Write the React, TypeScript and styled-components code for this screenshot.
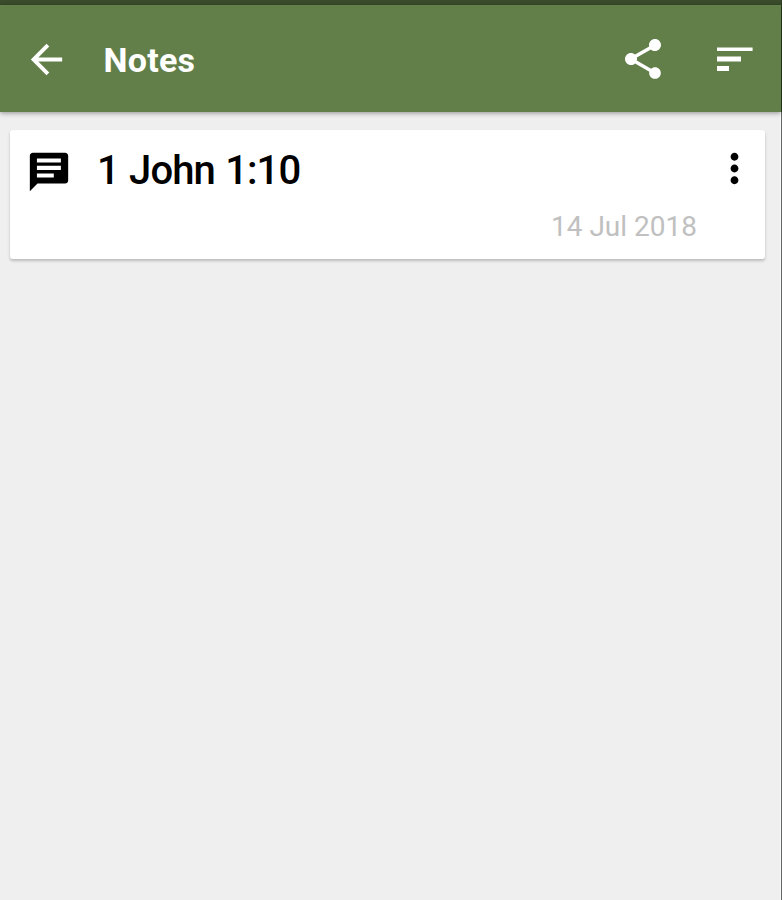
import React from "react";
import styled, { createGlobalStyle } from "styled-components";

const GlobalStyle = createGlobalStyle`
  *, *::before, *::after { box-sizing: border-box; }
  body { margin: 0; background: #efefef; }
`;

const Screen = styled.div`
  width: 782px;
  height: 900px;
  display: grid;
  grid-template-columns: 1fr 1px;
  overflow: hidden;
  font-family: Roboto, sans-serif;
`;

const Content = styled.div`
  display: flex;
  flex-direction: column;
  min-width: 0;
  background: #efefef;
`;

const Edge = styled.div`
  background: linear-gradient(#2c3b20 0 112px, #646665 112px);
`;

const StatusBar = styled.div`
  height: 5px;
  flex: none;
  background: #3b4d2c;
`;

const Toolbar = styled.header`
  height: 107px;
  flex: none;
  display: flex;
  align-items: center;
  padding: 1px 22px 0 23px;
  background: #627f4a;
  box-shadow: 0 1px 5px rgba(0, 0, 0, 0.4);
  z-index: 1;
`;

const Title = styled.h1`
  flex: 1;
  margin: 2px 0 0 33.5px;
  color: #fff;
  font-size: 34px;
  line-height: 40px;
  font-weight: 700;
  letter-spacing: 0.25px;
`;

const IconButton = styled.button<{ $size: number }>`
  flex: none;
  display: flex;
  width: ${(p) => p.$size}px;
  height: ${(p) => p.$size}px;
  margin: 0;
  padding: 0;
  border: 0;
  background: none;
  color: inherit;
`;

const Actions = styled.div`
  display: flex;
  gap: 44px;
  color: #fff;
`;

const BackButton = styled(IconButton)`
  color: #fff;
`;

const Icon = styled.svg`
  width: 100%;
  height: 100%;
  display: block;
  fill: currentColor;
`;

const Notes = styled.main`
  flex: 1;
  padding: 18px 15px 0 10px;
  border-right: 1px solid #fafafa;
`;

const Card = styled.article`
  height: 129px;
  padding: 15px 7px 0 16px;
  background: #fff;
  border-radius: 3px;
  box-shadow: 0 2px 3px rgba(0, 0, 0, 0.22);
`;

const CardHeader = styled.div`
  height: 54px;
  display: flex;
  align-items: flex-start;
  color: #000;
`;

const NoteIcon = styled.span`
  flex: none;
  width: 46px;
  height: 46px;
  margin-top: 4px;
`;

const Reference = styled.h2`
  flex: 1;
  margin: 3px 0 0 25px;
  font-size: 40px;
  line-height: 46px;
  font-weight: 500;
  letter-spacing: -0.9px;
  word-spacing: 1.2px;
`;

const DateText = styled.time`
  display: block;
  margin-right: 61px;
  text-align: right;
  color: #c0c0c0;
  font-size: 28px;
  line-height: 56px;
  font-weight: 400;
`;

function Glyph({ d }: { d: string }) {
  return (
    <Icon viewBox="0 0 24 24" aria-hidden="true">
      <path d={d} />
    </Icon>
  );
}

const paths = {
  back: "M20 11H7.83l5.59-5.59L12 4l-8 8 8 8 1.41-1.41L7.83 13H20v-2z",
  share:
    "M18 16.08c-.76 0-1.44.3-1.96.77L8.91 12.7c.05-.23.09-.46.09-.7s-.04-.47-.09-.7l7.05-4.11c.54.5 1.25.81 2.04.81 1.66 0 3-1.34 3-3s-1.34-3-3-3-3 1.34-3 3c0 .24.04.47.09.7L8.04 9.81C7.5 9.31 6.79 9 6 9c-1.66 0-3 1.34-3 3s1.34 3 3 3c.79 0 1.5-.31 2.04-.81l7.12 4.16c-.05.21-.08.43-.08.65 0 1.61 1.31 2.92 2.92 2.92s2.92-1.31 2.92-2.92-1.31-2.92-2.92-2.92z",
  sort: "M3 18h6v-2.5H3V18zM3 6.2v1.8h17.8V6.2H3zm0 7.05h12v-2.5H3v2.5z",
  note: "M20.4 2H3.6C2.7 2 2 2.7 2 3.6V22l4-4h14.4c.9 0 1.6-.7 1.6-1.6V3.6c0-.9-.7-1.6-1.6-1.6zM5.7 4.9h12.5v2.1H5.7V4.9zm0 3.9h12.5v2.2H5.7V8.8zm0 4h8.8v2.1H5.7v-2.1z",
  more: "M12 8c1.1 0 2-.9 2-2s-.9-2-2-2-2 .9-2 2 .9 2 2 2zm0 2c-1.1 0-2 .9-2 2s.9 2 2 2 2-.9 2-2-.9-2-2-2zm0 6c-1.1 0-2 .9-2 2s.9 2 2 2 2-.9 2-2-.9-2-2-2z",
};

export default function App() {
  return (
    <>
      <GlobalStyle />
      <Screen>
        <Content>
          <StatusBar />
          <Toolbar>
            <BackButton $size={47} aria-label="Back">
              <Glyph d={paths.back} />
            </BackButton>
            <Title>Notes</Title>
            <Actions>
              <IconButton $size={48} aria-label="Share">
                <Glyph d={paths.share} />
              </IconButton>
              <IconButton $size={48} aria-label="Sort">
                <Glyph d={paths.sort} />
              </IconButton>
            </Actions>
          </Toolbar>
          <Notes>
            <Card>
              <CardHeader>
                <NoteIcon>
                  <Glyph d={paths.note} />
                </NoteIcon>
                <Reference>1 John 1:10</Reference>
                <IconButton $size={47} aria-label="More options">
                  <Glyph d={paths.more} />
                </IconButton>
              </CardHeader>
              <DateText dateTime="2018-07-14">14 Jul 2018</DateText>
            </Card>
          </Notes>
        </Content>
        <Edge />
      </Screen>
    </>
  );
}
